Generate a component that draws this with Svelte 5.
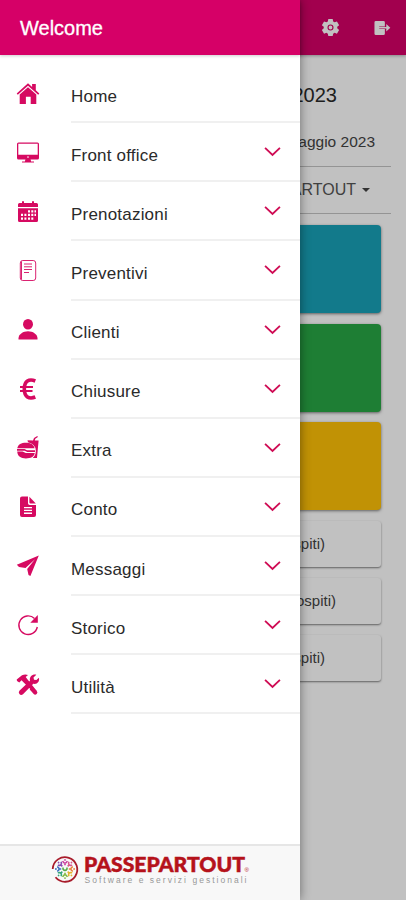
<script>
	const menu = [
		{ label: 'Home', icon: 'home', leaf: true },
		{ label: 'Front office', icon: 'desktop' },
		{ label: 'Prenotazioni', icon: 'calendar' },
		{ label: 'Preventivi', icon: 'paper' },
		{ label: 'Clienti', icon: 'person' },
		{ label: 'Chiusure', icon: 'euro' },
		{ label: 'Extra', icon: 'food' },
		{ label: 'Conto', icon: 'document' },
		{ label: 'Messaggi', icon: 'send' },
		{ label: 'Storico', icon: 'refresh' },
		{ label: 'Utilità', icon: 'tools' }
	];
	const cards = ['blue', 'green', 'yellow'];
	const guests = [
		{ text: '(2 ospiti)', end: 56 },
		{ text: '(2 ospiti)', end: 45 },
		{ text: '(2 ospiti)', end: 56 }
	];
	const colors = ['#c93a9c', '#d8568c', '#e8823c', '#e3b32e', '#7fba3f', '#35a57c', '#3a6fc0', '#8a4bb0'];
</script>

<div class="app">
	<div class="page">
		<header class="toolbar">
			<svg class="gear" viewBox="0 0 20 20">
				<path
					fill-rule="evenodd"
					d="M7.7 1h4.6l.5 2.6 1.5.9 2.5-.9 2.3 4-2 1.7v1.5l2 1.7-2.3 4-2.5-.9-1.5.9-.5 2.5H7.7l-.5-2.5-1.5-.9-2.5.9-2.3-4 2-1.7V9.3l-2-1.7 2.3-4 2.5.9 1.5-.9zM10 6.8a3.2 3.2 0 1 0 0 6.4 3.2 3.2 0 0 0 0-6.4zm0 1.2a2 2 0 1 1 0 4 2 2 0 0 1 0-4z"
				/>
			</svg>
			<svg class="exit" viewBox="0 0 18 16">
				<path
					d="M2 .5h8q1.500 0 1.500 1.500V6.300H5.500v2.800h6V14q0 1.500-1.500 1.500H2Q.5 15.500.5 14V2Q.5.5 2 .5z"
				/>
				<path d="M5 7h8V3.800l4.300 3.900-4.300 3.900V8.400H5z" />
			</svg>
		</header>
		<h2>Maggio 2023</h2>
		<div class="month">Maggio 2023</div>
		<div class="hotel">PASSEPARTOUT <span class="caret"></span></div>
		{#each cards as color}
			<div class="card {color}"></div>
		{/each}
		<div class="guests">
			{#each guests as guest}
				<div class="guest" style="padding-right: {guest.end}px">{guest.text}</div>
			{/each}
		</div>
	</div>
	<div class="shade"></div>

	<aside class="drawer">
		<header class="title">Welcome</header>
		<nav>
			{#each menu as item}
				<div class="item">
					<svg class="icon" viewBox="0 0 24 24">
						{#if item.icon === 'home'}
							<path
								d="M12 1.300 16.100 5V2h3.700v6.300L23.300 11.500l-1.100 1.200L12 3.700 1.800 12.700.7 11.500z"
							/>
							<path d="M12 5.300 20.300 12.600V22h-5.600v-7.300H9.900V22H3.700v-9.400z" />
						{:else if item.icon === 'desktop'}
							<path
								fill-rule="evenodd"
								d="M2.500 1.500h19Q23 1.500 23 3v14q0 1.500-1.500 1.500h-19Q1 18.500 1 17V3Q1 1.500 2.500 1.500zm-.2 1.300v11h19.400v-11zM12 15.300a.8.8 0 1 0 0 1.600.8.8 0 0 0 0-1.600z"
							/>
							<path d="M9.500 18h5l.6 2.500H18v1H6v-1h2.900z" />
						{:else if item.icon === 'calendar'}
							<path d="M3.500 3H6V1.300h2V3h8V1.300h2V3h2.500Q22 3 22 4.500V7H2V4.500Q2 3 3.500 3z" />
							<path
								fill-rule="evenodd"
								d="M2 8.300h20v12.200q0 1.500-1.500 1.500h-17Q2 22 2 20.500zM12 10.300v2.300h2v-2.300zm3.300 0v2.300h2v-2.300zm3.200 0v2.300h1.500v-2.300zM5 13.800v2.300h2v-2.300zm3.400 0v2.300h2v-2.300zm3.600 0v2.300h2v-2.300zm3.300 0v2.300h2v-2.300zm3.200 0v2.300h1.500v-2.300zM5 17.400v2.300h2v-2.300zm3.400 0v2.300h2v-2.300zm3.600 0v2.300h2v-2.300zm3.300 0v2.300h2v-2.300z"
							/>
						{:else if item.icon === 'paper'}
							<rect class="thin" x="4.300" y="1.500" width="15.400" height="20" rx="2.500" />
							<path class="thin" d="M5.500 2.500v18M8 5h8M8 7.800h8M8 10.500h8M8 13.500h5" />
						{:else if item.icon === 'person'}
							<ellipse cx="12" cy="6.200" rx="5" ry="5.300" />
							<path d="M2.500 21.500v-1.500C3 16 7 13.200 12 13.200s9 2.800 9.500 6.800v1.500z" />
						{:else if item.icon === 'euro'}
							<path class="bold" d="M19.300 4C13 1.400 8.300 4.200 8.300 12s4.700 10.600 11 8" />
							<path class="bars" d="M4 9.900h13M4 13.900h12.500" />
						{:else if item.icon === 'food'}
							<path
								d="M11.500 4.300 17 4.500 18 2l3.300-2 .6 1-2.600 1.700-.5 1.800h3.800L21 22h-4.300q3.300-2.800 3.100-7.500-.3-6.300-7.800-8.200z"
							/>
							<path
								d="M1.300 12.300C2 8.500 5.300 6.800 9.900 6.800s8 1.800 8.700 5.500zM1 12.900h7.500l2.500 1.300H19v1.800h-7.700L8.600 14.700H1zM1.200 15.500h5.300l3.300 1.600h9c-.8 4-4 5.300-8.900 5.300S1.600 20.500 1.200 15.500z"
							/>
						{:else if item.icon === 'document'}
							<path
								fill-rule="evenodd"
								d="M6 1.500h6v6.700Q12 10 13.800 10h6.200v10q0 2-2 2H6q-2 0-2-2V3.500q0-2 2-2zM8 12v1.300h8V12zm0 2.800v1.300h8v-1.300zm0 2.800v1.300h8v-1.300z"
							/>
							<path d="m13.400 1.700 6.400 6.900h-5.300q-1.100 0-1.100-1.100z" />
						{:else if item.icon === 'send'}
							<path d="M22.800 1.500.8 10.800 3 13l6.500 1L19 5.300 11.200 14.900 12.500 21l1.900 1z" />
						{:else if item.icon === 'refresh'}
							<path class="ring" d="M18.500 5.400A9.300 9.300 0 1 0 21.300 14" />
							<path d="M21.800 2v7.800h-7.500z" />
						{:else}
							<path
								d="M1 8 .7 6.400 6 2.200q3-1.400 6-.3L9.700 4l1.500 2.100L20.800 18l-2.200 2.300L7.200 9 5.600 7.300 3.300 9.500z"
							/>
							<path
								d="M20.300 1.700 17.500 4.500l.5 2.300 2.400.3 2.500-2.300c1 3.700-1.700 6.900-5.600 6L7 21.300q-2 1.500-3.600-.2-1.400-1.700.2-3.500L14 7.800c-1-4 2.600-7 6.300-6.100z"
							/>
							<path d="m16 14 4.700 4q1.500 1.500 0 3-1.600 1.500-3 0l-4-4.400z" />
						{/if}
					</svg>
					<div class="row">
						<span class="label">{item.label}</span>
						{#if !item.leaf}
							<svg class="chevron" viewBox="0 0 16 10">
								<path d="M1 1.500 8 8.300 15 1.500" />
							</svg>
						{/if}
					</div>
				</div>
			{/each}
		</nav>
		<footer>
			<svg class="logo" viewBox="0 0 204 34">
				<path
					d="M4.700 13A12.300 12.300 0 1 1 7.500 21.300"
					fill="none"
					stroke="#a81c2b"
					stroke-width="1.800"
				/>
				{#each colors as color, i}
					<g transform="rotate({i * 45} 17 13)">
						<path
							d="M14.600 5.200q2.400 4 4.800 0M17 7.200v2"
							fill="none"
							stroke={color}
							stroke-width="1.600"
						/>
						<circle cx="17" cy="3.900" r=".9" fill={color} />
					</g>
				{/each}
				<path d="M15 11.500v1.500q2 3 4 0v-1.500" fill="none" stroke="#59ac4b" stroke-width="1.600" />
				<text class="brand" x="36" y="15.500" textLength="161" lengthAdjust="spacingAndGlyphs"
					>PASSEPARTOUT</text
				>
				<text class="reg" x="196.500" y="16">®</text>
				<text class="claim" x="36.500" y="27" textLength="162">Software e servizi gestionali</text>
			</svg>
		</footer>
	</aside>
</div>

<style>
	:global(body) {
		margin: 0;
	}
	.app {
		position: relative;
		height: 900px;
		overflow: hidden;
		font-family: 'Liberation Sans', Arial, sans-serif;
		color: #2a2a2a;
	}
	.page {
		height: 900px;
		background: #fff;
	}
	.toolbar {
		display: flex;
		align-items: center;
		justify-content: flex-end;
		gap: 34px;
		height: 55px;
		padding-right: 15px;
		box-sizing: border-box;
		background: #d60067;
		box-shadow: 0 1px 3px rgba(0, 0, 0, 0.3);
	}
	.toolbar svg {
		fill: #fff;
	}
	.gear {
		width: 19px;
		height: 19px;
	}
	.exit {
		width: 17px;
		height: 16px;
	}
	h2 {
		margin: 0;
		height: 57px;
		padding: 12px 69px 0 0;
		box-sizing: border-box;
		font-size: 20px;
		font-weight: normal;
		line-height: 56px;
		text-align: right;
	}
	.month,
	.hotel {
		margin: 0 15px;
		box-sizing: border-box;
		border-bottom: 1px solid #c4c4c4;
		text-align: right;
	}
	.month {
		height: 55px;
		padding-right: 16px;
		color: #444;
		font-size: 15.5px;
		line-height: 60px;
	}
	.hotel {
		display: flex;
		align-items: center;
		justify-content: flex-end;
		gap: 6px;
		height: 47px;
		padding-right: 21px;
		font-size: 16px;
		color: #555;
	}
	.caret {
		border: 4.5px solid transparent;
		border-top-color: #444;
		border-bottom: 0;
	}
	.card {
		height: 88px;
		margin: 11px 25px 0;
		border-radius: 4px;
		box-shadow: 0 1px 3px rgba(0, 0, 0, 0.5);
	}
	.card + .card {
		margin-top: 10.5px;
	}
	.blue {
		background: #19a2b8;
	}
	.green {
		background: #28a745;
	}
	.yellow {
		background: #ffc107;
	}
	.guests {
		display: grid;
		gap: 11px;
		margin: 11px 25px 0;
	}
	.guest {
		height: 46px;
		box-sizing: border-box;
		border-radius: 3px;
		box-shadow: 0 1px 2px rgba(0, 0, 0, 0.5);
		color: #444;
		font-size: 15px;
		line-height: 45px;
		text-align: right;
	}
	.shade {
		position: absolute;
		inset: 0;
		background: rgba(0, 0, 0, 0.245);
	}
	.drawer {
		position: absolute;
		top: 0;
		left: 0;
		display: flex;
		flex-direction: column;
		width: 300px;
		height: 900px;
		background: #fff;
		box-shadow: 0 0 10px rgba(0, 0, 0, 0.45);
	}
	.title {
		height: 55px;
		padding-left: 20px;
		background: #d60067;
		box-shadow: 0 1px 3px rgba(0, 0, 0, 0.2);
		color: #fff;
		font-size: 20px;
		line-height: 56px;
		-webkit-text-stroke: 0.3px #fff;
	}
	nav {
		flex: 1;
		padding-top: 9.2px;
	}
	.item {
		display: flex;
		align-items: center;
		height: 59.08px;
		padding-left: 16px;
	}
	.icon {
		width: 24px;
		height: 24px;
		margin-right: 31px;
		fill: #d60a61;
	}
	.thin,
	.bold,
	.bars,
	.ring {
		fill: none;
		stroke: #d60a61;
	}
	.thin {
		stroke-width: 0.9;
	}
	.bold {
		stroke-width: 3.6;
	}
	.bars {
		stroke-width: 2;
	}
	.ring {
		stroke-width: 1.4;
	}
	.row {
		display: flex;
		flex: 1;
		align-items: center;
		justify-content: space-between;
		height: 100%;
		padding-right: 19px;
		box-sizing: border-box;
		border-bottom: 2px solid #f0f0f0;
	}
	.label {
		padding-top: 8.4px;
		font-size: 17px;
		letter-spacing: 0.2px;
	}
	.chevron {
		width: 17px;
		height: 11px;
		fill: none;
		stroke: #cf0c54;
		stroke-width: 1.7;
	}
	footer {
		display: flex;
		justify-content: center;
		height: 56px;
		padding-top: 10px;
		box-sizing: border-box;
		border-top: 2px solid #e6e6e6;
		background: #f8f8f8;
	}
	.logo {
		width: 204px;
		height: 34px;
		overflow: visible;
	}
	.brand {
		font-family: Lato, sans-serif;
		font-size: 21px;
		font-weight: 900;
		fill: #b5121b;
		stroke: #b5121b;
		stroke-width: 0.5px;
	}
	.reg {
		font-size: 6px;
		fill: #b5121b;
	}
	.claim {
		font-size: 8.5px;
		fill: #999;
	}
</style>
